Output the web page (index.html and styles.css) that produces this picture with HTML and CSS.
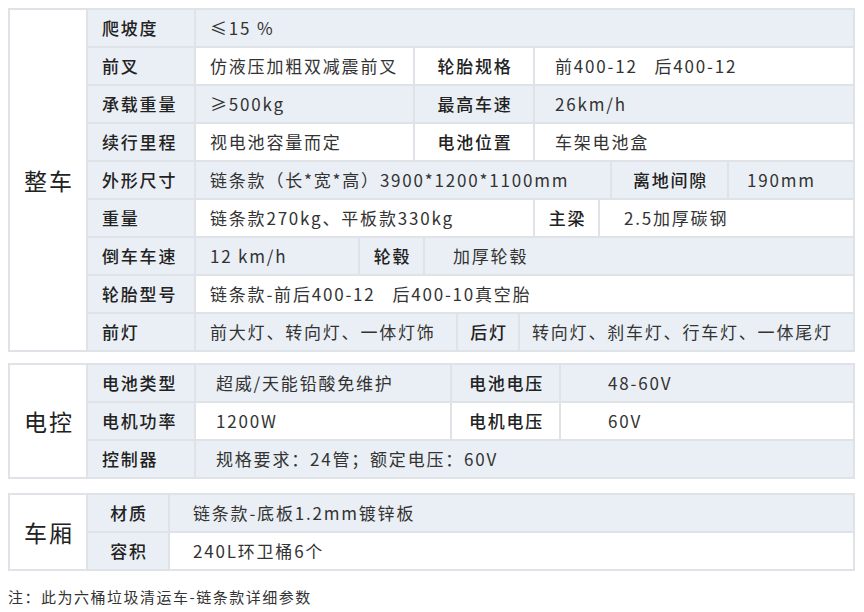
FILE: index.html
```html
<!DOCTYPE html>
<html lang="zh-CN">
<head>
<meta charset="utf-8">
<title>六桶垃圾清运车参数</title>
<link rel="stylesheet" href="styles.css">
</head>
<body>
<div class="page">
  <section class="spec spec-car">
    <div class="group">整车</div>
    <div class="rows">
      <div class="row alt">
        <div class="cell lab">爬坡度</div>
        <div class="cell val grow">≤15 %</div>
      </div>
      <div class="row">
        <div class="cell lab">前叉</div>
        <div class="cell val w219">仿液压加粗双减震前叉</div>
        <div class="cell lab2 w120">轮胎规格</div>
        <div class="cell val grow p20">前400-12&nbsp;&nbsp;&nbsp;后400-12</div>
      </div>
      <div class="row alt">
        <div class="cell lab">承载重量</div>
        <div class="cell val w219">≥500kg</div>
        <div class="cell lab2 w120">最高车速</div>
        <div class="cell val grow p20">26km/h</div>
      </div>
      <div class="row">
        <div class="cell lab">续行里程</div>
        <div class="cell val w219">视电池容量而定</div>
        <div class="cell lab2 w120">电池位置</div>
        <div class="cell val grow p20">车架电池盒</div>
      </div>
      <div class="row alt">
        <div class="cell lab">外形尺寸</div>
        <div class="cell val w416">链条款（长*宽*高）3900*1200*1100mm</div>
        <div class="cell lab2 w117">离地间隙</div>
        <div class="cell val grow p18">190mm</div>
      </div>
      <div class="row">
        <div class="cell lab">重量</div>
        <div class="cell val w339">链条款270kg、平板款330kg</div>
        <div class="cell lab2 w65">主梁</div>
        <div class="cell val grow p24">2.5加厚碳钢</div>
      </div>
      <div class="row alt">
        <div class="cell lab">倒车车速</div>
        <div class="cell val w164">12 km/h</div>
        <div class="cell lab2 w65">轮毂</div>
        <div class="cell val grow p28">加厚轮毂</div>
      </div>
      <div class="row">
        <div class="cell lab">轮胎型号</div>
        <div class="cell val grow">链条款-前后400-12&nbsp;&nbsp;&nbsp;后400-10真空胎</div>
      </div>
      <div class="row alt">
        <div class="cell lab">前灯</div>
        <div class="cell val w262">前大灯、转向灯、一体灯饰</div>
        <div class="cell lab2 w62">后灯</div>
        <div class="cell val grow p12">转向灯、刹车灯、行车灯、一体尾灯</div>
      </div>
    </div>
  </section>

  <section class="spec spec-elec">
    <div class="group">电控</div>
    <div class="rows">
      <div class="row alt">
        <div class="cell lab">电池类型</div>
        <div class="cell val w256 p20">超威/天能铅酸免维护</div>
        <div class="cell lab2 w109">电池电压</div>
        <div class="cell val grow p47">48-60V</div>
      </div>
      <div class="row">
        <div class="cell lab">电机功率</div>
        <div class="cell val w256 p20">1200W</div>
        <div class="cell lab2 w109">电机电压</div>
        <div class="cell val grow p47">60V</div>
      </div>
      <div class="row alt">
        <div class="cell lab">控制器</div>
        <div class="cell val grow p20">规格要求：24管；额定电压：60V</div>
      </div>
    </div>
  </section>

  <section class="spec spec-box">
    <div class="group">车厢</div>
    <div class="rows">
      <div class="row alt">
        <div class="cell lab lab-narrow">材质</div>
        <div class="cell val grow p23">链条款-底板1.2mm镀锌板</div>
      </div>
      <div class="row">
        <div class="cell lab lab-narrow">容积</div>
        <div class="cell val grow p23">240L环卫桶6个</div>
      </div>
    </div>
  </section>

  <p class="note">注：此为六桶垃圾清运车-链条款详细参数</p>
</div>
</body>
</html>
```

FILE: styles.css
```css
* { box-sizing: border-box; }

html, body {
  margin: 0;
  padding: 0;
  background: #ffffff;
}

body {
  font-family: "Noto Sans CJK SC", "Noto Sans", sans-serif;
  color: #2a2a2a;
}

.page {
  padding: 8px 0 0 8px;
  width: 864px;
}

.spec {
  display: flex;
  width: 847px;
  border: 2px solid #dfe3e8;
  background: #ffffff;
}

.spec-car { margin-bottom: 11px; }
.spec-elec { margin-bottom: 14px; }

.group {
  width: 76px;
  flex: none;
  display: flex;
  align-items: center;
  justify-content: center;
  font-size: 23px;
  letter-spacing: 2px;
  padding-left: 2px;
  color: #222;
  background: #ffffff;
}

.rows {
  flex: 1;
  display: flex;
  flex-direction: column;
}

.row {
  display: flex;
  height: 36px;
  background: #ffffff;
}

.row + .row {
  height: 38px;
  border-top: 2px solid #dfe3e8;
}

.row.alt { background: #eaeff5; }

.cell {
  flex: none;
  display: flex;
  align-items: center;
  border-left: 2px solid #dfe3e8;
  padding-left: 14px;
  padding-bottom: 1px;
  font-size: 17px;
  letter-spacing: 1.8px;
  white-space: nowrap;
  overflow: hidden;
}

.lab {
  width: 108px;
  background: #eaeff5;
  font-weight: 500;
  color: #222;
}

.lab-narrow {
  width: 82px;
  justify-content: center;
  padding-left: 2px;
}

.lab2 {
  justify-content: center;
  padding-left: 2px;
  font-weight: 500;
  color: #222;
}

.val {
  font-weight: 400;
  color: #333;
}

.grow { flex: 1; }

.w62 { width: 62px; }
.w65 { width: 65px; }
.w109 { width: 109px; }
.w117 { width: 117px; }
.w120 { width: 120px; }
.w164 { width: 164px; }
.w219 { width: 219px; }
.w256 { width: 256px; }
.w262 { width: 262px; }
.w339 { width: 339px; }
.w416 { width: 416px; }

.p12 { padding-left: 12px; }
.p18 { padding-left: 18px; }
.p20 { padding-left: 20px; }
.p23 { padding-left: 23px; }
.p24 { padding-left: 24px; }
.p28 { padding-left: 28px; }
.p47 { padding-left: 47px; }

.note {
  margin: 15px 0 0 0;
  font-size: 15px;
  letter-spacing: 1.5px;
  color: #333;
}
```
